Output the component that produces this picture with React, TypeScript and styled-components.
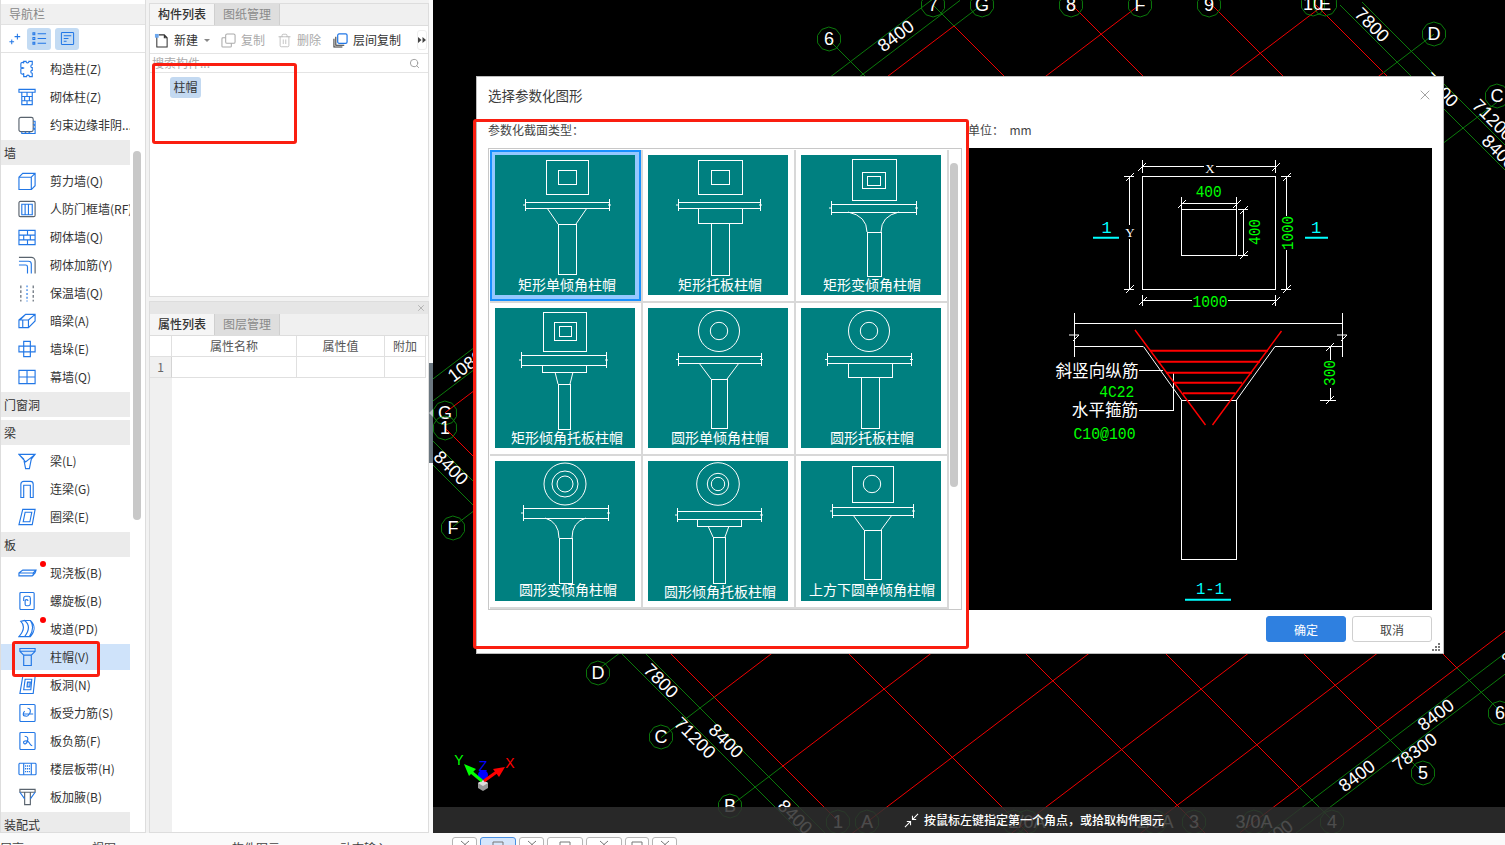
import React from 'react';
import styled, { createGlobalStyle } from 'styled-components';
import { Search, Trash2, X as CloseX } from 'lucide-react';

const CJK = '"Noto Sans CJK SC", "Noto Sans", sans-serif';

const Global = createGlobalStyle`
  html, body { margin: 0; padding: 0; background: #f2f2f2; overflow: hidden; }
  #root { width: 1505px; height: 845px; }
  * { box-sizing: border-box; }
`;

const Page = styled.div`
  position: relative; width: 1505px; height: 845px; overflow: hidden;
  display: flex; flex-direction: column;
  font: 12px/1.2 ${CJK}; color: #333; background: #f2f2f2;
`;
const Main = styled.div`display: flex; height: 833px;`;

/* ---------- navigation ---------- */
const Nav = styled.aside`
  width: 146px; margin-right: 3px; padding-top: 4px; flex: none;
  display: flex; flex-direction: column; background: #fff;
  border-left: 1px solid #ddd; border-right: 1px solid #ddd; border-bottom: 1px solid #ddd;
  position: relative; overflow: hidden;
`;
const NavTitle = styled.div`
  height: 20px; padding-left: 8px; background: #f0f0f0; color: #888;
  display: flex; align-items: center; flex: none;
`;
const NavTools = styled.div`
  height: 29px; flex: none; display: flex; align-items: center; gap: 4px; padding-left: 7px;
  border-top: 1px solid #e2e2e2; border-bottom: 1px solid #e2e2e2;
`;
const ToolToggle = styled.span`
  width: 24px; height: 22px; border-radius: 3px; display: flex; align-items: center; justify-content: center;
  background: #c3dbf3;
`;
const NavList = styled.div`width: 129px; flex: 1; overflow: hidden; padding-top: 1px;`;
const NavSection = styled.div`
  height: 28px; display: flex; align-items: center; padding: 0;
  & > span { width: 100%; height: 25px; line-height: 25px; padding-left: 3px; background: #ebebeb; color: #333; }
`;
const NavItem = styled.div<{ $on?: boolean }>`
  position: relative; height: 28px; display: flex; align-items: center; white-space: nowrap; overflow: hidden;
  padding: 2px 0 0 17px; gap: 13px;
  background: ${p => (p.$on ? 'linear-gradient(#fff 2px, #cfe3fa 2px)' : 'transparent')};
`;
const NavDot = styled.i`
  position: absolute; left: 39px; top: 3px; width: 6px; height: 6px; border-radius: 50%; background: #f00;
`;
const NavIconBox = styled.svg`width: 19px; height: 20px; flex: none; fill: none; stroke: #2277e6; stroke-width: 1.2;`;
const NavScroll = styled.div`
  position: absolute; left: 132px; top: 151px; width: 8px; height: 369px; border-radius: 4px; background: #c8c8c8;
`;

/* ---------- middle column ---------- */
const Middle = styled.div`width: 280px; flex: none; display: flex; flex-direction: column; gap: 4px; padding-top: 3px; position: relative;`;
const ListPanel = styled.section`height: 294px; flex: none; background: #fff; border: 1px solid #ddd; display: flex; flex-direction: column;`;
const PropPanel = styled.section`flex: 1; background: #fff; border: 1px solid #ddd; display: flex; flex-direction: column; overflow: hidden;`;
const TabBar = styled.div`height: 22px; flex: none; display: flex; background: #f0f0f0; border-bottom: 1px solid #ddd;`;
const Tab = styled.div<{ $on?: boolean }>`
  width: 65px; display: flex; align-items: center; justify-content: center;
  font-weight: ${p => (p.$on ? 500 : 400)};
  color: ${p => (p.$on ? '#333' : '#8a8a8a')};
  background: ${p => (p.$on ? '#f5f5f5' : '#dedede')};
  border-right: 1px solid #cfcfcf;
`;
const ListTools = styled.div`
  height: 28px; flex: none; display: flex; align-items: center; gap: 12px; padding: 2px 0 0 4px; position: relative;
  border-bottom: 1px solid #e4e4e4;
`;
const ListTool = styled.span<{ $off?: boolean }>`
  display: flex; align-items: center; gap: 5px; color: ${p => (p.$off ? '#aaa' : '#333')};
`;
const Caret = styled.i`
  width: 0; height: 0; margin-left: -6px; margin-right: -1px;
  border-left: 3px solid transparent; border-right: 3px solid transparent; border-top: 3px solid #888;
`;
const More = styled.span`
  position: absolute; right: 1px; top: 4px; width: 10px; height: 20px; border: 1px solid #eee; border-radius: 3px;
  display: flex; align-items: center; justify-content: center;
`;
const MoreGlyph = styled.svg`width: 8px; height: 6px; fill: #444; flex: none;`;
const SearchRow = styled.div`
  height: 19px; flex: none; display: flex; align-items: center; justify-content: space-between;
  padding: 0 8px 0 2px; color: #aaa; border-bottom: 1px solid #e4e4e4;
`;
const ChipArea = styled.div`padding: 4px 0 0 20px;`;
const Chip = styled.span`
  display: inline-flex; align-items: center; justify-content: center; width: 31px; height: 21px; border-radius: 3px;
  background: #c3d9f1; color: #333;
`;
const PropHead = styled.div`height: 12px; flex: none; background: #e6e6e6; display: flex; justify-content: flex-end; align-items: center; padding-right: 2px; color: #aaa;`;
const Table = styled.div`
  flex: 1; display: grid; grid-template-columns: 22px 125px 88px 41px; grid-auto-rows: 21px; align-content: start;
  background: linear-gradient(90deg, #f0f0f0 22px, #fff 22px);
`;
const Th = styled.div`
  background: #fff; border-right: 1px solid #e0e0e0; border-bottom: 1px solid #e0e0e0;
  display: flex; align-items: center; justify-content: center; color: #555;
`;
const Td = styled.div`background: #fff; border-right: 1px solid #e0e0e0; border-bottom: 1px solid #e0e0e0;`;
const RowNo = styled.div`background: #f0f0f0; border-right: 1px solid #d4d4d4; border-bottom: 1px solid #e0e0e0; display: flex; align-items: center; justify-content: center; color: #666;`;

const Splitter = styled.div`width: 4px; flex: none; position: relative; background: #fafafa;`;
const SplitGrip = styled.div`
  position: absolute; left: 0; top: 363px; width: 4px; height: 100px; background: #6b7780;
  &::after { content: ''; position: absolute; left: 0; top: 46px; border: 4px solid transparent; border-left: 0; border-right: 4px solid #b8c0c6; }
`;

/* ---------- canvas ---------- */
const Canvas = styled.main`flex: 1; position: relative; background: #000; overflow: hidden;`;
const CadSvg = styled.svg`display: block; width: 1072px; height: 833px;`;
const CadText = styled.text`font: 18px "Liberation Sans", sans-serif; fill: #fff; text-anchor: middle; dominant-baseline: central;`;
const GizmoText = styled.text<{ $c: string }>`font: 14px "Liberation Sans", sans-serif; fill: ${p => p.$c}; text-anchor: middle; dominant-baseline: central;`;

const StatusBar = styled.div`
  position: absolute; left: 0; right: 0; bottom: 0; height: 26px; background: rgba(46,46,46,.86);
  display: flex; align-items: center; gap: 5px; padding-left: 471px; color: #fff; font-weight: 500;
`;

/* ---------- modal ---------- */
const Modal = styled.div`
  position: absolute; left: 43px; top: 76px; width: 968px; height: 578px; background: #fff;
  border: 1px solid #bcbcbc; display: flex; flex-direction: column; padding: 0 11px;
`;
const ModalTitle = styled.div`
  height: 38px; flex: none; display: flex; align-items: center; justify-content: space-between;
  font-size: 13.5px; color: #3c3c3c; padding-bottom: 2px;
`;
const CloseBtn = styled.span`display: flex; color: #808080; margin-right: -1px;`;
const ModalBody = styled.div`display: flex; gap: 6px; flex: none;`;
const LeftCol = styled.div`width: 474px; flex: none;`;
const RightCol = styled.div`width: 464px; flex: none;`;
const FieldLabel = styled.div`height: 33px; display: flex; align-items: center; color: #444; padding-bottom: 3px; white-space: pre;`;
const GalleryBox = styled.div`
  position: relative; height: 462px; border: 1px solid #c8c8c8; padding: 1px; overflow: hidden; background: #fff;
`;
const Gallery = styled.div`display: grid; grid-template-columns: repeat(3, 153px); grid-auto-rows: 153px; width: 457px;`;
const Cell = styled.div<{ $on?: boolean }>`
  padding: 5px 0 0 5px; border-right: 2px solid #d8d8d8; border-bottom: 2px solid #d8d8d8;
  box-shadow: ${p => (p.$on ? 'inset 0 0 0 2px #1890ff, inset 0 0 0 6px #94c8ff' : 'none')};
`;
const TileSvg = styled.svg`display: block; width: 140px; height: 140px; background: #008080; fill: none; stroke: #fff; stroke-width: 1;`;
const TileText = styled.text`font: 14px ${CJK}; fill: #fff; stroke: none; text-anchor: middle; dominant-baseline: central;`;
const GalleryThumb = styled.div`position: absolute; left: 461px; top: 14px; width: 8px; height: 324px; border-radius: 4px; background: #c9c9c9;`;
const PreviewSvg = styled.svg`display: block; width: 464px; height: 462px; background: #000; fill: none; stroke: #fff; stroke-width: 1;`;
const PvText = styled.text<{ $c?: string; $f?: string; $s?: number }>`
  font: ${p => p.$s || 17}px ${p => p.$f || '"Liberation Mono"'}, monospace; fill: ${p => p.$c || '#0f0'}; stroke: none;
  text-anchor: middle; dominant-baseline: central;
`;
const PvCjk = styled.text`font: 16.6px ${CJK}; fill: #fff; stroke: none; text-anchor: middle; dominant-baseline: central;`;
const ModalFoot = styled.div`display: flex; justify-content: flex-end; gap: 6px; margin-top: 6px;`;
const Btn = styled.button<{ $primary?: boolean }>`
  width: 80px; height: 26px; border-radius: 3px; font: 12px ${CJK}; padding: 0;
  border: 1px solid ${p => (p.$primary ? '#2f80e0' : '#cfcfcf')};
  background: ${p => (p.$primary ? '#2f80e0' : '#fff')};
  color: ${p => (p.$primary ? '#fff' : '#444')};
`;
const Grip = styled.svg`position: absolute; right: 2px; bottom: 1px; width: 9px; height: 9px; fill: #777;`;

/* ---------- footer & annotations ---------- */
const Bottom = styled.footer`height: 12px; flex: none; display: flex; background: #fafafa; overflow: hidden;`;
const BottomText = styled.div`width: 452px; flex: none; display: flex; padding-top: 8px; color: #444; white-space: nowrap;`;
const BottomLabel = styled.span<{ $w: number }>`width: ${p => p.$w}px; flex: none; line-height: 14px;`;
const BottomTools = styled.div`display: flex; gap: 3px; padding-top: 4px;`;
const BottomBtn = styled.div<{ $w: number; $on?: boolean }>`
  width: ${p => p.$w}px; height: 20px; border: 1px solid ${p => (p.$on ? '#4a90e2' : '#b5b5b5')}; border-radius: 3px;
  background: ${p => (p.$on ? '#d6e6fb' : '#fff')}; display: flex; justify-content: center; padding-top: 2px;
`;
const BottomGlyph = styled.svg`width: 14px; height: 8px; fill: none; stroke: #777; stroke-width: 1;`;
const RedFrame = styled.div<{ $l: number; $t: number; $w: number; $h: number }>`
  position: absolute; left: ${p => p.$l}px; top: ${p => p.$t}px; width: ${p => p.$w}px; height: ${p => p.$h}px;
  border: 3px solid #fa1e10; border-radius: 3px; pointer-events: none;
`;

/* ---------- nav icons ---------- */
const D = '#59636e';
const B = '#2277e6';
const icons: Record<string, React.ReactNode> = {
  gzz: <path d="M6 2h2.5a1.5 1.5 0 0 0 3 0H15v3.5a1.5 1.5 0 0 0 0 3v3a1.5 1.5 0 0 0 0 3V18h-3a1.5 1.5 0 0 0-3 0H6v-3.5a1.6 1.6 0 0 1-3-1v-3a1.6 1.6 0 0 1 3-1v-1a1.6 1.6 0 0 1-3-1V5a1.6 1.6 0 0 1 3-1z" />,
  qtz: <path d="M1 2h17v3H1zM4 5h11v13H4zM4 9.5h11M4 14h11M9.5 5v4.5M7 9.5V14M12 9.5V14M9.5 14v4" />,
  ysbj: <><rect x="1" y="2" width="15" height="15" rx="2" stroke={D} /><path d="M16 6h2v13H4v-2M16 9l2 2M16 13l2 2M7 17l2 2M11 17l2 2" /></>,
  jlq: <path d="M1 6h13v13H1zM1 6l4-4h13v13l-4 4M14 6l4-4" />,
  rfm: <><rect x="1" y="2" width="17" height="16" rx="1.5" stroke={D} /><path d="M4 5v11h11V5zM7.5 5v11M11 5v11" /></>,
  qtq: <path d="M1 3h17v15H1zM1 8h17M1 13h17M10 3v5M6 8v5M13 8v5M10 13v5" />,
  qtjj: <g stroke={D}><path d="M1 2h13a4 4 0 0 1 4 4v13" /><path d="M1 6h10a3 3 0 0 1 3 3v10M1 10h7a2 2 0 0 1 2 2v7" stroke={B} /></g>,
  bwq: <g><path d="M3 2v3M3 7v3M3 12v3M3 17v2M16 2v3M16 7v3M16 12v3M16 17v2" stroke={D} /><path d="M9.5 2v2M9.5 6v2M9.5 10v2M9.5 14v2M9.5 18v1" /></g>,
  anl: <path d="M1 9l7-6h10v7l-7 7H1zM1 9h10v8M11 9l7-6M5 9v8M8 3l-6 6" />,
  qd: <path d="M6 2h7v5h5v6h-5v5H6v-5H1V7h5zM6 7h7v6H6z" />,
  mq: <path d="M1 3h17v14H1zM9.5 3v14M1 10h17" />,
  liang: <path d="M1 3h17l-4 5-2 10H8L6 8zM1 3l7 8 10-8" />,
  lianl: <path d="M3 19V5a3 3 0 0 1 3-3h7a3 3 0 0 1 3 3v14h-3V6H6v13z" />,
  qliang: <path d="M5 2h13l-3 16H1zM7.5 5h7l-2 10h-7z" />,
  xjb: <path d="M1 10l4-3h14l-1 3-3 3H1zM1 10h15l3-3M16 10v3" />,
  lxb: <><rect x="2" y="1" width="15" height="18" rx="1" /><path d="M6 10V7a2 2 0 0 1 2-2h3a2 2 0 0 1 2 2v6a2 2 0 0 1-2 2H9a1.5 1.5 0 0 1-1.5-1.5V10a1.5 1.5 0 0 1 3 0" /></>,
  pd: <path d="M7 1c5 4 6 9 0 17H1c6-7 6-12 2-16zM7 1h6c6 6 5 11 0 17H7M13 1c4 6 3 11-1 17" />,
  zm: <path d="M2 1h16v3H2zM2 4l4 4h8l4-4M6 8v11h8V8" />,
  bd: <><path d="M5 1h13l-2 18H2zM7.5 4h7l-1 11H6z" /><path d="M10 7h3l-.5 5h-3z" fill="#b9d3f2" /></>,
  bslj: <><rect x="2" y="1" width="16" height="18" rx="1" /><path d="M5 11h11M10 5c3 0 4 3 2 6s-3 3-5 2M7 8c-2 2-2 5 0 5" /></>,
  bfj: <><rect x="2" y="1" width="16" height="18" rx="1" /><path d="M7 5c3 0 4 2 3 5s-3 4-4 2 3-3 5-1 2 4 4 4" /></>,
  lcbd: <><rect x="1" y="4" width="18" height="12" rx="1" /><path d="M6 4v12M14 4v12" /><path d="M8 6v9M10 6v9M12 6v9" strokeDasharray="1.5 1.5" /></>,
  bjy: <g stroke={D}><path d="M2 2h16v3H2zM7 5v13h6V5" /><path d="M2 5l5 7M18 5l-5 7" stroke={B} fill="none" /></g>,
};

type Row = { s: string } | { t: string; i: string; dot?: boolean; on?: boolean };
const rows: Row[] = [
  { t: '构造柱(Z)', i: 'gzz' }, { t: '砌体柱(Z)', i: 'qtz' }, { t: '约束边缘非阴...', i: 'ysbj' },
  { s: '墙' },
  { t: '剪力墙(Q)', i: 'jlq' }, { t: '人防门框墙(RF)', i: 'rfm' }, { t: '砌体墙(Q)', i: 'qtq' }, { t: '砌体加筋(Y)', i: 'qtjj' },
  { t: '保温墙(Q)', i: 'bwq' }, { t: '暗梁(A)', i: 'anl' }, { t: '墙垛(E)', i: 'qd' }, { t: '幕墙(Q)', i: 'mq' },
  { s: '门窗洞' }, { s: '梁' },
  { t: '梁(L)', i: 'liang' }, { t: '连梁(G)', i: 'lianl' }, { t: '圈梁(E)', i: 'qliang' },
  { s: '板' },
  { t: '现浇板(B)', i: 'xjb', dot: true }, { t: '螺旋板(B)', i: 'lxb' }, { t: '坡道(PD)', i: 'pd', dot: true },
  { t: '柱帽(V)', i: 'zm', on: true }, { t: '板洞(N)', i: 'bd' }, { t: '板受力筋(S)', i: 'bslj' },
  { t: '板负筋(F)', i: 'bfj' }, { t: '楼层板带(H)', i: 'lcbd' }, { t: '板加腋(B)', i: 'bjy' },
  { s: '装配式' },
];

/* ---------- CAD drawing ---------- */
const RED = '#f00000';
const GREEN = '#0b7a0b';
type S = [number, number, number, string];
const cLines: S[] = [
  [-17, 445, 838, RED], [-195, 700, 1030, RED], [-372, 900, 1210, RED], [-512, 1000, 1299, RED], [-512, 1299, 1332, GREEN],
  [-650, 1100, 1377, RED], [-650, 1377, 1423, GREEN], [-789, 829, 875, GREEN], [-789, 875, 1457, RED], [-789, 1457, 1500, GREEN],
  [-928, 933, 954, GREEN], [-928, 954, 1370, RED], [-1067, 1071, 1400, RED], [-1207, 1209, 1420, RED], [-1311, 1316, 1430, RED],
  [8, 433, 840, GREEN], [32, 433, 830, GREEN], [-1335, 1340, 1505, GREEN], [-1360, 1362, 1505, GREEN],
];
const dLines: S[] = [
  [751, 954, 982, GREEN], [751, 445, 954, RED], [871, 453, 505, GREEN], [871, 505, 1140, RED], [1011, 584, 1320, RED],
  [1124, 598, 650, GREEN], [1124, 650, 1383, RED], [1124, 1383, 1434, GREEN], [1240, 661, 715, GREEN], [1240, 715, 1440, RED], [1240, 1440, 1497, GREEN],
  [1361, 730, 782, GREEN], [1361, 782, 1300, RED], [1481, 851, 1300, RED], [1602, 1010, 1350, RED], [1700, 1140, 1400, RED], [1775, 1240, 1505, RED],
  [708, 433, 960, GREEN], [730, 433, 960, GREEN], [1797, 1250, 1505, GREEN], [1818, 1250, 1505, GREEN],
];
const bubbles: [number, number, string][] = [
  [829, 39, '6'], [933, 5, '7'], [982, 5, 'G'], [1071, 5, '8'], [1140, 5, 'F'], [1209, 5, '9'], [1313, 4, '10'], [1325, 4, 'E'],
  [1434, 34, 'D'], [1497, 96, 'C'], [445, 413, 'G'], [445, 428, '1'], [453, 528, 'F'], [598, 673, 'D'], [661, 737, 'C'],
  [730, 806, 'B'], [838, 822, '1'], [867, 822, 'A'], [1014, 822, ''], [1027, 822, '2/0A'], [1155, 822, '2/0A'], [1194, 822, '3'],
  [1254, 822, '3/0A'], [1332, 822, '4'], [1423, 773, '5'], [1500, 713, '6'],
];
const dims: [number, number, string, number][] = [
  [896, 36, '8400', -37], [1372, 25, '7800', 45], [1441, 90, '7800', 45], [1493, 120, '71200', 45], [1499, 152, '8400', 45],
  [470, 363, '10800', -37], [451, 468, '8400', 45], [661, 681, '7800', 45], [695, 738, '71200', 45], [726, 741, '8400', 45],
  [795, 817, '8400', 45], [1357, 776, '8400', -37], [1415, 752, '78300', -37], [1436, 715, '8400', -37], [1520, 650, '8400', -37], [1275, 836, '8400', -37],
];
const octagon = (cx: number, cy: number, r = 12) =>
  Array.from({ length: 10 }, (_, i) => {
    const a = (i / 10) * Math.PI * 2 + 0.3;
    return `${(cx + r * Math.cos(a)).toFixed(1)},${(cy + r * Math.sin(a)).toFixed(1)}`;
  }).join(' ');

const CadDrawing = () => (
  <CadSvg viewBox="433 0 1072 833">
    {cLines.map(([c, a, b, col], i) => <line key={`c${i}`} x1={a} y1={a + c} x2={b} y2={b + c} stroke={col} />)}
    {dLines.map(([d, a, b, col], i) => <line key={`d${i}`} x1={a} y1={d - 0.76 * a} x2={b} y2={d - 0.76 * b} stroke={col} />)}
    {bubbles.map(([x, y, t], i) => (
      <g key={`b${i}`}>
        <polygon points={octagon(x, y)} fill="none" stroke={GREEN} />
        {t && <CadText x={x} y={y}>{t}</CadText>}
      </g>
    ))}
    {dims.map(([x, y, t, r], i) => <CadText key={`t${i}`} x={x} y={y} transform={`rotate(${r} ${x} ${y})`}>{t}</CadText>)}
    <polygon points="483,780 488,783 488,788 483,791 478,788 478,783" fill="#999" />
    <polygon points="483,780 488,783 483,786 478,783" fill="#ddd" />
    <circle cx="483" cy="775" r="5" fill="#00f" />
    <line x1="484" y1="781" x2="498" y2="771" stroke="#f00" strokeWidth="3" />
    <polygon points="505,767 493,769 499,777" fill="#f00" />
    <line x1="482" y1="781" x2="470" y2="771" stroke="#0f0" strokeWidth="3" />
    <polygon points="464,764 476,769 469,776" fill="#0f0" />
    <GizmoText $c="#0f0" x={459} y={760}>Y</GizmoText>
    <GizmoText $c="#00f" x={483} y={766}>Z</GizmoText>
    <GizmoText $c="#f00" x={510} y={763}>X</GizmoText>
  </CadSvg>
);

/* ---------- parametric tiles ---------- */
type TileCfg = {
  label: string; cx: number; ly: number;
  rects?: number[][]; circles?: number[][];
  slab: number[]; plate?: number[]; taper?: number[][]; curve?: boolean; col: number[];
};
const tiles: TileCfg[] = [
  { label: '矩形单倾角柱帽', cx: 72, ly: 129, rects: [[51, 5, 42, 34], [63, 15, 18, 14]], slab: [30, 114, 47, 53], taper: [[52, 53, 63, 69], [92, 53, 81, 69]], col: [63, 81, 69, 119] },
  { label: '矩形托板柱帽', cx: 72, ly: 129, rects: [[50, 5, 44, 34], [63, 15, 18, 14]], slab: [30, 112, 47, 53], plate: [50, 94, 53, 68], col: [63, 81, 68, 120] },
  { label: '矩形变倾角柱帽', cx: 71, ly: 129, rects: [[51, 4, 44, 41], [61, 17, 23, 16], [66, 21, 13, 9]], slab: [30, 115, 49, 57], taper: [[47, 57, 66, 77], [98, 57, 80, 77]], curve: true, col: [66, 80, 77, 121] },
  { label: '矩形倾角托板柱帽', cx: 72, ly: 129, rects: [[48, 4, 43, 39], [59, 14, 22, 18], [64, 18, 12, 10]], slab: [26, 111, 47, 57], plate: [47, 91, 57, 64], taper: [[60, 64, 63, 76], [78, 64, 75, 76]], col: [63, 75, 76, 121] },
  { label: '圆形单倾角柱帽', cx: 72, ly: 129, circles: [[71, 23, 20.5], [71, 23, 8.7]], slab: [30, 113, 48, 55], taper: [[51, 55, 63, 71], [91, 55, 79, 71]], col: [63, 79, 71, 120] },
  { label: '圆形托板柱帽', cx: 71, ly: 129, circles: [[68, 23, 20.5], [68, 23, 8.7]], slab: [26, 110, 48, 55], plate: [47, 91, 55, 69], col: [60, 78, 69, 120] },
  { label: '圆形变倾角柱帽', cx: 73, ly: 128, circles: [[70, 23, 21], [70, 23, 13], [70, 23, 8]], slab: [28, 113, 47, 57], taper: [[50, 57, 64, 77], [91, 57, 77, 77]], curve: true, col: [64, 77, 77, 122] },
  { label: '圆形倾角托板柱帽', cx: 72, ly: 130, circles: [[70, 23, 21.3], [70, 23, 10.7], [70, 23, 6.7]], slab: [29, 113, 50, 58], plate: [49, 93, 58, 65], taper: [[60, 65, 65, 76], [81, 65, 77, 76]], col: [65, 77, 76, 122] },
  { label: '上方下圆单倾角柱帽', cx: 71, ly: 128, rects: [[51, 5, 41, 36]], circles: [[71, 23, 8.7]], slab: [31, 112, 46, 54], taper: [[52, 54, 63, 69], [91, 54, 80, 69]], col: [63, 80, 69, 118] },
];
const box = (a: number, b: number, c: number, d: number) => <rect x={a + 0.5} y={c + 0.5} width={b - a} height={d - c} />;
const Tile = ({ t }: { t: TileCfg }) => {
  const [sa, sb, sc, sd] = t.slab;
  return (
    <TileSvg viewBox="0 0 140 140">
      <g shapeRendering="crispEdges">
        {t.rects?.map((r, i) => <rect key={i} x={r[0] + 0.5} y={r[1] + 0.5} width={r[2]} height={r[3]} />)}
        {box(sa, sb, sc, sd)}
        <path d={`M${sa + .5} ${sc - 3}V${sd + 3}M${sb + .5} ${sc - 3}V${sd + 3}`} />
        {t.plate && box(t.plate[0], t.plate[1], t.plate[2], t.plate[3])}
        {box(t.col[0], t.col[1], t.col[2], t.col[3])}
      </g>
      {t.circles?.map((c, i) => <circle key={i} cx={c[0]} cy={c[1]} r={c[2]} />)}
      {t.taper?.map((l, i) =>
        t.curve
          ? <path key={i} d={`M${l[0]} ${l[1]}Q${l[2]} ${l[1] + 4} ${l[2]} ${l[3]}`} />
          : <line key={i} x1={l[0]} y1={l[1]} x2={l[2]} y2={l[3]} />,
      )}
      <path d={`M${sa - 2} ${(sc + sd) / 2}h3M${sb - 1} ${(sc + sd) / 2}h3`} />
      <TileText x={t.cx} y={t.ly}>{t.label}</TileText>
    </TileSvg>
  );
};

/* ---------- preview drawing ---------- */
const tick = (x: number, y: number) => `M${x - 4} ${y + 4}L${x + 4} ${y - 4}`;
const Preview = () => (
  <PreviewSvg viewBox="968 148 464 462">
    <g shapeRendering="crispEdges">
      <rect x="1142.5" y="176.5" width="133" height="113" />
      <rect x="1181.5" y="209.5" width="55" height="46" />
      <rect x="1181.5" y="400.5" width="55" height="159" />
      <path d="M1074.5 323.5H1342.5M1074.5 346.5H1143M1275 346.5H1342.5M1074.5 313V357M1342.5 313V357" />
      <path d="M1142.5 166.5H1204M1216 166.5H1275.5M1142.5 160V173M1275.5 160V173" />
      <path d="M1181.5 203.5H1236.5M1181.5 197V209M1236.5 197V209" />
      <path d="M1129.5 176.5V225M1129.5 239V289.5M1124 176.5H1134M1124 289.5H1134" />
      <path d="M1243.5 209.5V255.5M1238 209.5H1248M1238 255.5H1248" />
      <path d="M1286.5 176.5V216M1286.5 250V289.5M1281 176.5H1291M1281 289.5H1291" />
      <path d="M1142.5 300.5H1192M1228 300.5H1275.5M1142.5 295V306M1275.5 295V306" />
      <path d="M1330.5 346.5V360M1330.5 388V400.5M1320 400.5H1336" />
      <path d="M1139 370.5H1163M1139 410.5H1173.5V373" />
    </g>
    <path d={tick(1142, 167) + tick(1276, 167) + tick(1182, 204) + tick(1237, 204) + tick(1130, 177) + tick(1130, 289) + tick(1244, 210) + tick(1244, 255) + tick(1287, 177) + tick(1287, 289) + tick(1143, 301) + tick(1276, 301) + tick(1330, 347) + tick(1330, 400)} />
    <path d="M1069 335l10 0-6 6M1337 335l10 0-6 6" />
    <path d="M1143.5 346.5L1181.5 400M1275 346.5L1236.5 400" />
    <path d="M1135 330L1205.5 425M1281.5 331L1212.5 425" stroke="#f00" strokeWidth="1.4" />
    <path d="M1150 350.7H1268M1158 361.7H1260M1166 372.7H1252M1174 382.7H1242M1183 393.3H1235" stroke="#f00" strokeWidth="2" />
    <path d="M1093 237.7H1119M1305 237.7H1328M1185 599.7H1231" stroke="#0ff" strokeWidth="2" />
    <PvText $c="#fff" $f='"Liberation Serif"' $s={13} x={1210} y={168}>X</PvText>
    <PvText $c="#fff" $f='"Liberation Serif"' $s={13} x={1130} y={232}>Y</PvText>
    <PvText x={1208.7} y={192} textLength={26} lengthAdjust="spacingAndGlyphs">400</PvText>
    <PvText x={1255} y={232} textLength={26} lengthAdjust="spacingAndGlyphs" transform="rotate(-90 1255 232)">400</PvText>
    <PvText x={1288} y={233} textLength={34} lengthAdjust="spacingAndGlyphs" transform="rotate(-90 1288 233)">1000</PvText>
    <PvText x={1210} y={302} textLength={35} lengthAdjust="spacingAndGlyphs">1000</PvText>
    <PvText x={1330} y={373} textLength={26} lengthAdjust="spacingAndGlyphs" transform="rotate(-90 1330 373)">300</PvText>
    <PvText $c="#0ff" x={1106.7} y={228}>1</PvText>
    <PvText $c="#0ff" x={1316} y={228}>1</PvText>
    <PvText $c="#0ff" x={1210} y={589} textLength={28} lengthAdjust="spacingAndGlyphs">1-1</PvText>
    <PvText x={1116.7} y={392} textLength={35} lengthAdjust="spacingAndGlyphs">4C22</PvText>
    <PvText x={1104.5} y={434} textLength={62} lengthAdjust="spacingAndGlyphs">C10@100</PvText>
    <PvCjk x={1097} y={370}>斜竖向纵筋</PvCjk>
    <PvCjk x={1105} y={409}>水平箍筋</PvCjk>
  </PreviewSvg>
);

const MiniIcon = styled.svg<{ $c?: string }>`
  width: 15px; height: 15px; flex: none; fill: none; stroke: ${p => p.$c || 'currentColor'}; stroke-width: 1.1;
`;

export default function App() {
  return (
    <Page>
      <Global />
      <Main>
        <Nav>
          <NavTitle>导航栏</NavTitle>
          <NavTools>
            <MiniIcon $c={B} viewBox="0 0 16 16"><path d="M10 3v6M7 6h6M4 9v5M1.5 11.5h5" /></MiniIcon>
            <ToolToggle>
              <MiniIcon $c={B} viewBox="0 0 16 16"><path d="M6 3h9M6 8h9M6 13h9M1 2h2v2H1zM1 7h2v2H1zM1 12h2v2H1z" /></MiniIcon>
            </ToolToggle>
            <ToolToggle>
              <MiniIcon $c={B} viewBox="0 0 16 16"><path d="M2.5 1.5h11a1 1 0 0 1 1 1v11a1 1 0 0 1-1 1h-11a1 1 0 0 1-1-1v-11a1 1 0 0 1 1-1zM4 5h8M4 8h5M4 11h3" /></MiniIcon>
            </ToolToggle>
          </NavTools>
          <NavList>
            {rows.map((r, i) =>
              's' in r ? (
                <NavSection key={i}><span>{r.s}</span></NavSection>
              ) : (
                <NavItem key={i} $on={r.on}>
                  <NavIconBox viewBox="0 0 20 20">{icons[r.i]}</NavIconBox>
                  <span>{r.t}</span>
                  {r.dot && <NavDot />}
                </NavItem>
              ),
            )}
          </NavList>
          <NavScroll />
        </Nav>

        <Middle>
          <ListPanel>
            <TabBar><Tab $on>构件列表</Tab><Tab>图纸管理</Tab></TabBar>
            <ListTools>
              <ListTool>
                <MiniIcon viewBox="0 0 16 16"><path d="M3 3v12h11V5l-3-3H5M11 2v3h3" /><path d="M1 1h4v4H1z" fill="#6ba7ef" stroke="none" /></MiniIcon>
                新建
              </ListTool>
              <Caret />
              <ListTool $off>
                <MiniIcon viewBox="0 0 16 16"><rect x="5" y="1" width="10" height="10" rx="1.5" /><path d="M5 5H2a1 1 0 0 0-1 1v8a1 1 0 0 0 1 1h8a1 1 0 0 0 1-1v-3" /></MiniIcon>
                复制
              </ListTool>
              <ListTool $off><Trash2 size={15} strokeWidth={1.1} />删除</ListTool>
              <ListTool>
                <MiniIcon viewBox="0 0 16 16"><rect x="5" y="1" width="10" height="10" rx="1.5" stroke={B} strokeWidth="1.3" /><path d="M3 4v9h9M1 6v9h9" /></MiniIcon>
                层间复制
              </ListTool>
              <More><MoreGlyph viewBox="0 0 8 6"><path d="M0 0l3.5 3L0 6zM4.5 0L8 3 4.5 6z" /></MoreGlyph></More>
            </ListTools>
            <SearchRow>搜索构件...<Search size={11} color="#999" /></SearchRow>
            <ChipArea><Chip>柱帽</Chip></ChipArea>
          </ListPanel>
          <PropPanel>
            <PropHead><CloseX size={10} /></PropHead>
            <TabBar><Tab $on>属性列表</Tab><Tab>图层管理</Tab></TabBar>
            <Table>
              <Th /><Th>属性名称</Th><Th>属性值</Th><Th>附加</Th>
              <RowNo>1</RowNo><Td /><Td /><Td />
            </Table>
          </PropPanel>
        </Middle>

        <Splitter><SplitGrip /></Splitter>

        <Canvas>
          <CadDrawing />
          <StatusBar>
            <MiniIcon viewBox="0 0 16 16"><path d="M15 1L9 7M9 3v4h4M1 15l6-6M7 13V9H3" /></MiniIcon>
            按鼠标左键指定第一个角点，或拾取构件图元
          </StatusBar>
          <Modal>
            <ModalTitle>
              选择参数化图形
              <CloseBtn><CloseX size={16} strokeWidth={1.1} /></CloseBtn>
            </ModalTitle>
            <ModalBody>
              <LeftCol>
                <FieldLabel>参数化截面类型：</FieldLabel>
                <GalleryBox>
                  <Gallery>
                    {tiles.map((t, i) => <Cell key={t.label} $on={i === 0}><Tile t={t} /></Cell>)}
                  </Gallery>
                  <GalleryThumb />
                </GalleryBox>
              </LeftCol>
              <RightCol>
                <FieldLabel>单位：  mm</FieldLabel>
                <Preview />
              </RightCol>
            </ModalBody>
            <ModalFoot>
              <Btn $primary>确定</Btn>
              <Btn>取消</Btn>
            </ModalFoot>
            <Grip viewBox="0 0 9 9"><path d="M6 0h2v2H6zM3 3h2v2H3zM6 3h2v2H6zM0 6h2v2H0zM3 6h2v2H3zM6 6h2v2H6z" /></Grip>
          </Modal>
        </Canvas>
      </Main>

      <Bottom>
        <BottomText>
          <BottomLabel $w={92}>层高</BottomLabel>
          <BottomLabel $w={140}>视图</BottomLabel>
          <BottomLabel $w={108}>构件图元</BottomLabel>
          <BottomLabel $w={100}>动态输入</BottomLabel>
        </BottomText>
        <BottomTools>
          {[25, 36, 25, 36, 36, 24, 25].map((w, i) => (
            <BottomBtn key={i} $w={w} $on={i === 1}>
              <BottomGlyph viewBox="0 0 14 8"><path d={i % 2 ? 'M2 8V2h10v6' : 'M3 1l8 7M11 1L3 8'} /></BottomGlyph>
            </BottomBtn>
          ))}
        </BottomTools>
      </Bottom>

      <RedFrame $l={152} $t={63} $w={145} $h={81} />
      <RedFrame $l={12} $t={641} $w={88} $h={36} />
      <RedFrame $l={473} $t={119} $w={496} $h={530} />
    </Page>
  );
}
